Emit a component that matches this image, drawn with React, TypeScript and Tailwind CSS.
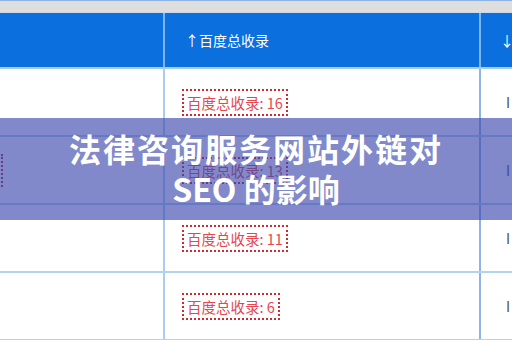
const rows = [16, 13, 11, 6];

const cjk = "font-['Noto_Sans_CJK_SC','Noto_Sans',sans-serif]";

const App = () => {
  return (
    <div className={`relative h-[340px] w-[512px] overflow-hidden bg-white ${cjk}`}>
      {/* top gray strip */}
      <div className="h-[13px] border-t border-[#8fb3e6] border-b border-b-[#c9d9ef] bg-[#dedede]" />

      {/* header */}
      <div className="grid h-[54px] grid-cols-[165px_316px_1fr] bg-[#0b6fde] text-[14px] text-white">
        <div className="border-r-2 border-[#7fb5ee]" />
        <div className="flex items-center border-r-2 border-[#7fb5ee] pl-[20px]">↑百度总收录</div>
        <div className="flex items-center overflow-hidden whitespace-nowrap pl-[19px]">↓权重</div>
      </div>
      <div className="h-[2px] bg-[#a8cdf2]" />

      {/* rows */}
      {rows.map((n, i) => (
        <div
          key={n}
          className="grid h-[68px] grid-cols-[165px_316px_1fr] border-b-2 border-[#b3d2f0]"
        >
          <div className="flex items-center border-r-2 border-[#a9cdf0]">
            {i === 1 && <div className="h-[33px] w-[3px] border-r-2 border-dotted border-[#d3232b]" />}
          </div>
          <div className="flex items-center border-r-2 border-[#8fb3e6] pl-[17px]">
            <div className="border-2 border-dotted border-[#cf2a30] px-[3px] text-[14.5px] leading-[23px] text-[#e6474c]">
              百度总收录: {n}
            </div>
          </div>
          <div className="flex items-center overflow-hidden whitespace-nowrap pl-[25px] text-[14px] text-[#555]">
            I
          </div>
        </div>
      ))}

      {/* title overlay */}
      <div className="absolute left-0 right-0 top-[118px] flex h-[102px] flex-col items-center justify-center bg-[rgba(58,70,172,0.64)] pb-[2px]">
        <div className="text-center text-[32px] font-bold leading-[40px] tracking-[2px] text-white">
          法律咨询服务网站外链对
        </div>
        <div className="text-center text-[32px] font-bold leading-[40px] text-white">SEO 的影响</div>
      </div>
    </div>
  );
};

export default App;
